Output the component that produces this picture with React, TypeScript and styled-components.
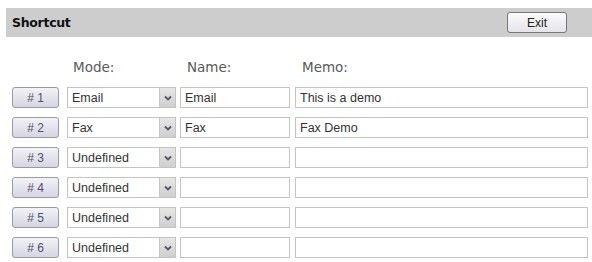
import React from "react";
import styled, { createGlobalStyle } from "styled-components";

const GlobalStyle = createGlobalStyle`
  body {
    margin: 0;
    background: #ffffff;
    font-family: "Liberation Sans", Arial, sans-serif;
  }
`;

const Page = styled.div`
  width: 592px;
  height: 262px;
  padding-top: 8px;
  box-sizing: border-box;
  overflow: hidden;
`;

const TitleBar = styled.div`
  margin-left: 6px;
  height: 29px;
  background: #cdcdcd;
  display: flex;
  align-items: center;
  justify-content: space-between;
  padding: 0 25px 0 6px;
`;

const Title = styled.span`
  font-family: "DejaVu Sans", Verdana, sans-serif;
  font-weight: bold;
  font-size: 12.5px;
  color: #111;
  letter-spacing: -0.3px;
`;

const ExitButton = styled.button`
  width: 60px;
  height: 21px;
  border: 1px solid #777;
  border-radius: 3px;
  background: linear-gradient(#fbfbfb, #e4e4ea);
  font-family: "Liberation Sans", Arial, sans-serif;
  font-size: 12px;
  color: #222;
  padding: 0;
`;

const Grid = styled.div`
  display: grid;
  grid-template-columns: 55px 113px 115px 293px;
  row-gap: 9px;
  padding: 22px 0 0 12px;
`;

const ColHead = styled.div<{ $indent: number }>`
  font-family: "DejaVu Sans", Verdana, sans-serif;
  font-size: 13.5px;
  color: #5a5a5a;
  padding-left: ${(p) => p.$indent}px;
  height: 20px;
  margin-bottom: -1px;
`;

const RowButton = styled.button`
  width: 47px;
  height: 21px;
  border: 1px solid #9a9aa4;
  border-radius: 3px;
  background: linear-gradient(#f2f2f8, #d6d6e2);
  font-family: "Liberation Sans", Arial, sans-serif;
  font-size: 12px;
  color: #50506a;
  padding: 0;
`;

const SelectBox = styled.div`
  width: 109px;
  height: 21px;
  box-sizing: border-box;
  border: 1px solid #c4c4c4;
  background: #fff;
  display: flex;
  align-items: center;
`;

const SelectText = styled.span`
  flex: 1;
  padding-left: 4px;
  font-size: 12.5px;
  color: #333;
`;

const Arrow = styled.span`
  width: 15px;
  height: 19px;
  background: linear-gradient(#e6e6e6, #cfcfcf);
  border-left: 1px solid #c8c8c8;
  display: flex;
  align-items: center;
  justify-content: center;
`;

const Field = styled.div<{ $width: number }>`
  width: ${(p) => p.$width}px;
  height: 21px;
  box-sizing: border-box;
  border: 1px solid #c4c4c4;
  background: #fff;
  padding-left: 4px;
  display: flex;
  align-items: center;
  font-size: 12.5px;
  color: #333;
`;

const rows = [
  { mode: "Email", name: "Email", memo: "This is a demo" },
  { mode: "Fax", name: "Fax", memo: "Fax Demo" },
  { mode: "Undefined", name: "", memo: "" },
  { mode: "Undefined", name: "", memo: "" },
  { mode: "Undefined", name: "", memo: "" },
  { mode: "Undefined", name: "", memo: "" },
];

const Chevron = () => (
  <svg width="8" height="6" viewBox="0 0 8 6">
    <path d="M1 1.5 L4 4.5 L7 1.5" fill="none" stroke="#556" strokeWidth="1.8" />
  </svg>
);

export default function App() {
  return (
    <Page>
      <GlobalStyle />
      <TitleBar>
        <Title>Shortcut</Title>
        <ExitButton>Exit</ExitButton>
      </TitleBar>
      <Grid>
        <div />
        <ColHead $indent={6}>Mode:</ColHead>
        <ColHead $indent={7}>Name:</ColHead>
        <ColHead $indent={7}>Memo:</ColHead>
        {rows.map((r, i) => (
          <React.Fragment key={i}>
            <RowButton># {i + 1}</RowButton>
            <SelectBox>
              <SelectText>{r.mode}</SelectText>
              <Arrow>
                <Chevron />
              </Arrow>
            </SelectBox>
            <Field $width={110}>{r.name}</Field>
            <Field $width={293}>{r.memo}</Field>
          </React.Fragment>
        ))}
      </Grid>
    </Page>
  );
}
